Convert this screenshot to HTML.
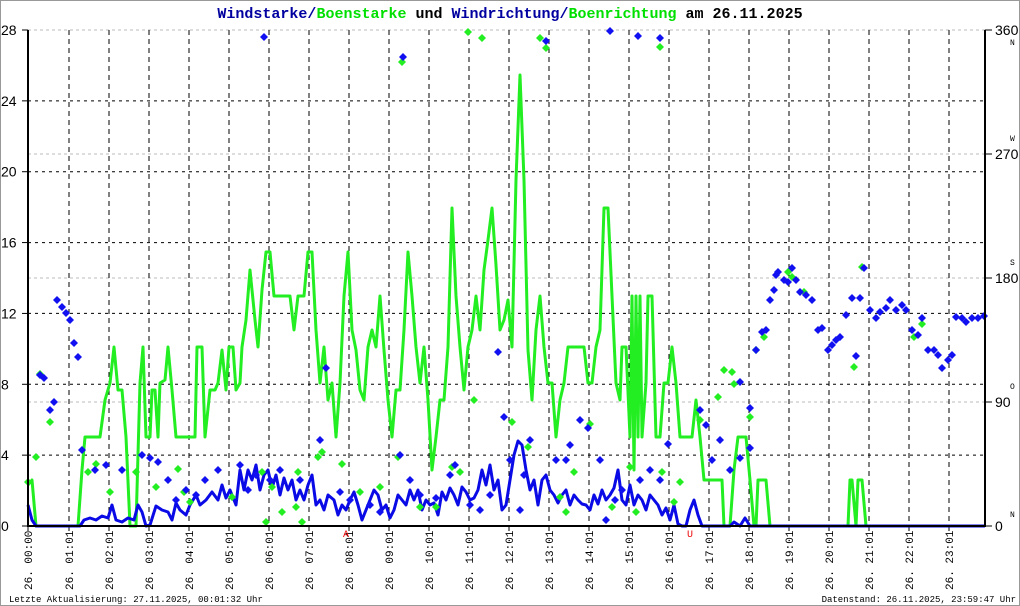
<!DOCTYPE html>
<html><head><meta charset="utf-8"><style>
html,body{margin:0;padding:0;background:#fff;width:1020px;height:606px;overflow:hidden}
svg{display:block}
.t{font-family:"Liberation Mono",monospace;font-weight:bold;font-size:15px}
.ax{font-family:"Liberation Sans",sans-serif;font-size:14px;fill:#000}
.xl{font-family:"Liberation Mono",monospace;font-size:11px;fill:#000}
.ft{font-family:"Liberation Mono",monospace;font-size:9px;fill:#000}
</style></head><body>
<svg id="s" width="1020" height="606" xmlns="http://www.w3.org/2000/svg">
<rect x="0.5" y="0.5" width="1019" height="605" fill="#fff" stroke="#999"/>
<text x="510" y="18" text-anchor="middle" class="t"><tspan fill="#0000a0">Windstarke/</tspan><tspan fill="#00e000">Boenstarke</tspan><tspan fill="#000"> und </tspan><tspan fill="#0000a0">Windrichtung/</tspan><tspan fill="#00e000">Boenrichtung</tspan><tspan fill="#000"> am 26.11.2025</tspan></text>
<g id="grid"></g>
<polyline fill="none" stroke="#22ee22" stroke-width="3" stroke-linejoin="round" points="28,485 32,480 36,526 78,526 82,470 85,437 100,437 105,400 110,383 114,347 118,390 122,390 126,437 130,526 136,526 140,383 143,347 146,437 150,437 152,390 155,390 158,437 160,383 165,380 168,347 172,390 176,437 195,437 197,347 202,347 205,437 210,390 215,390 218,383 222,350 226,390 229,347 233,347 236,390 240,383 242,347 246,320 250,270 255,320 258,347 262,290 266,252 270,252 274,296 290,296 294,330 298,296 304,296 308,252 312,252 316,330 320,383 324,347 328,400 332,383 336,437 340,383 344,296 348,252 352,330 356,350 360,390 364,400 368,347 372,330 376,347 380,296 384,350 388,400 392,437 396,390 400,390 404,330 408,252 412,296 416,347 420,383 424,347 428,400 432,470 436,437 440,400 444,400 448,347 452,208 456,296 460,347 464,390 468,347 472,330 476,296 480,330 484,270 488,240 492,208 496,265 500,330 504,320 508,300 512,347 516,180 520,75 524,180 528,350 532,400 536,330 540,296 544,347 548,383 552,383 556,437 560,400 564,383 568,347 584,347 588,383 592,383 596,347 600,330 604,208 608,208 612,296 616,383 620,400 622,347 626,347 630,437 632,296 634,470 636,296 638,437 640,296 642,437 646,383 648,296 652,296 656,437 660,437 664,383 668,383 672,347 676,383 680,437 692,437 696,400 700,437 704,480 722,480 724,526 730,526 734,470 738,437 746,437 750,480 754,526 756,526 758,480 766,480 770,526 848,526 850,480 852,480 856,526 858,480 862,480 866,526 985,526"/>
<polyline fill="none" stroke="#0a0ae6" stroke-width="3" stroke-linejoin="round" points="28,505 32,520 36,526 80,526 84,520 90,518 96,520 102,516 108,518 112,505 116,520 122,522 128,518 134,520 138,505 142,512 146,526 150,525 156,506 162,510 168,512 172,520 176,503 180,510 186,515 190,505 196,495 200,505 206,500 212,492 218,500 222,485 226,498 230,490 236,505 240,470 244,490 248,470 252,480 256,465 260,490 264,475 268,470 272,488 276,475 280,495 284,478 288,490 292,480 296,500 300,490 304,500 308,485 312,475 316,505 320,500 324,510 328,495 334,500 338,515 342,505 346,510 350,500 354,492 358,505 362,520 366,510 370,500 374,490 378,495 382,510 386,505 390,518 394,510 398,495 402,500 406,505 410,490 414,500 418,490 422,510 426,500 430,505 434,503 438,515 442,492 446,500 450,488 454,495 458,505 462,487 466,492 470,500 474,498 478,490 482,470 486,485 490,465 494,490 498,480 502,510 506,505 510,480 514,455 518,441 522,445 526,470 530,490 534,480 538,505 542,480 546,475 550,490 554,495 558,503 562,495 566,490 570,505 574,495 578,500 582,504 586,505 590,510 594,495 598,504 602,490 606,500 610,495 614,488 618,470 622,500 626,505 630,485 634,505 638,495 642,500 646,510 650,495 654,500 658,505 662,515 666,508 670,520 674,505 678,524 682,526 686,526 690,510 694,500 698,515 702,526 730,526 734,522 740,526 745,518 750,526 985,526"/>
<g id="dia"></g>
<line x1="28" y1="30" x2="28" y2="527" stroke="#000" stroke-width="2"/>
<line x1="985" y1="30" x2="985" y2="527" stroke="#000" stroke-width="2"/>
<line x1="28" y1="526" x2="985" y2="526" stroke="#000" stroke-width="2"/>
<text x="346" y="537" fill="#e00" font-family="Liberation Mono,monospace" font-size="10" text-anchor="middle">A</text>
<text x="690" y="537" fill="#e00" font-family="Liberation Mono,monospace" font-size="10" text-anchor="middle">U</text>
<text x="9" y="602" class="ft">Letzte Aktualisierung: 27.11.2025, 00:01:32 Uhr</text>
<text x="1016" y="602" class="ft" text-anchor="end">Datenstand: 26.11.2025, 23:59:47 Uhr</text>
</svg>
<script>
var g=document.getElementById('grid'),s='';
for(var v=0;v<=28;v+=2){var y=526-v*496/28;
 if(v%4==0){s+='<line x1="22" y1="'+y+'" x2="28" y2="'+y+'" stroke="#000"/>';
  if(v>0&&v<28)s+='<line x1="28" y1="'+y+'" x2="985" y2="'+y+'" stroke="#000" stroke-dasharray="3,4"/>';
  s+='<text x="1" y="'+(y+5)+'" class="ax">'+v+'</text>';}}
[[360,30,'N',15],[270,154,'W',-13],[180,278,'S',-13],[90,402,'O',-13],[0,526,'N',-9]].forEach(function(a){
 if(a[0]>0)s+='<line x1="28" y1="'+a[1]+'" x2="985" y2="'+a[1]+'" stroke="#bbb" stroke-dasharray="3,3"/>';
 s+='<line x1="985" y1="'+a[1]+'" x2="992" y2="'+a[1]+'" stroke="#000"/>';
 s+='<text x="995" y="'+(a[1]+5)+'" class="ax">'+a[0]+'</text>';
 s+='<text x="1010" y="'+(a[1]+a[3])+'" font-family="Liberation Mono,monospace" font-size="8" fill="#000">'+a[2]+'</text>';});
for(var h=0;h<24;h++){var x=28+h*40+(h?1:0);
 if(h)s+='<line x1="'+x+'" y1="30" x2="'+x+'" y2="526" stroke="#000" stroke-dasharray="5,4"/>';
 s+='<line x1="'+x+'" y1="526" x2="'+x+'" y2="531" stroke="#000"/>';
 var l='26. '+(h<10?'0':'')+h+':'+(h?'01':'00');
 s+='<text transform="translate('+(x+4)+',590) rotate(-90)" class="xl">'+l+'</text>';}
g.innerHTML=s;
var B=[[264,37],[403,57],[610,31],[638,36],[660,38],[546,41],[57,300],[62,307],[66,313],[70,320],[74,343],[78,357],[40,375],[44,378],[50,410],[54,402],[82,450],[95,470],[106,465],[122,470],[142,455],[150,458],[158,462],[168,480],[176,500],[186,490],[196,495],[205,480],[218,470],[240,465],[248,490],[256,475],[270,480],[280,470],[300,480],[320,440],[326,368],[340,492],[350,500],[370,505],[380,512],[400,455],[410,480],[420,495],[436,498],[450,475],[455,465],[470,505],[480,510],[490,495],[498,352],[504,417],[510,460],[520,510],[524,475],[530,440],[556,460],[566,460],[570,445],[580,420],[588,428],[600,460],[606,520],[615,500],[622,490],[640,480],[650,470],[660,480],[668,444],[700,410],[706,425],[712,460],[720,440],[730,470],[740,458],[750,448],[740,382],[750,408],[756,350],[762,332],[766,330],[770,300],[774,290],[776,275],[778,272],[784,280],[788,282],[792,268],[796,280],[800,292],[806,295],[812,300],[818,330],[822,328],[828,350],[832,345],[836,340],[840,337],[846,315],[852,298],[856,356],[860,298],[864,268],[870,310],[876,318],[880,312],[886,308],[890,300],[896,310],[902,305],[906,310],[912,330],[918,335],[922,318],[928,350],[934,350],[938,355],[942,368],[948,360],[952,355],[956,317],[962,318],[966,322],[972,318],[978,318],[984,316]];
var G=[[28,480],[36,455],[40,372],[50,420],[88,470],[96,462],[110,490],[136,470],[156,485],[178,467],[184,490],[190,500],[232,495],[262,470],[266,520],[272,485],[282,510],[296,505],[298,470],[302,520],[318,455],[322,450],[342,462],[360,490],[380,485],[398,455],[402,60],[420,505],[436,505],[452,465],[460,470],[474,398],[468,30],[482,36],[512,420],[528,445],[540,36],[546,46],[560,495],[566,510],[574,470],[590,422],[612,505],[630,465],[636,510],[660,45],[662,470],[674,500],[680,480],[700,418],[718,395],[724,368],[732,370],[734,382],[750,415],[756,348],[764,335],[788,270],[792,275],[804,290],[854,365],[862,265],[922,322],[914,335]];
function d(p,c){return '<path d="M'+p[0]+' '+(p[1]-4)+'l4 4-4 4-4-4z" fill="'+c+'"/>';}
var t='';G.forEach(function(p){t+=d([p[0],p[1]+2],'#22ee22');});B.forEach(function(p){t+=d(p,'#1010f0');});
document.getElementById('dia').innerHTML=t;
</script>
</body></html>
